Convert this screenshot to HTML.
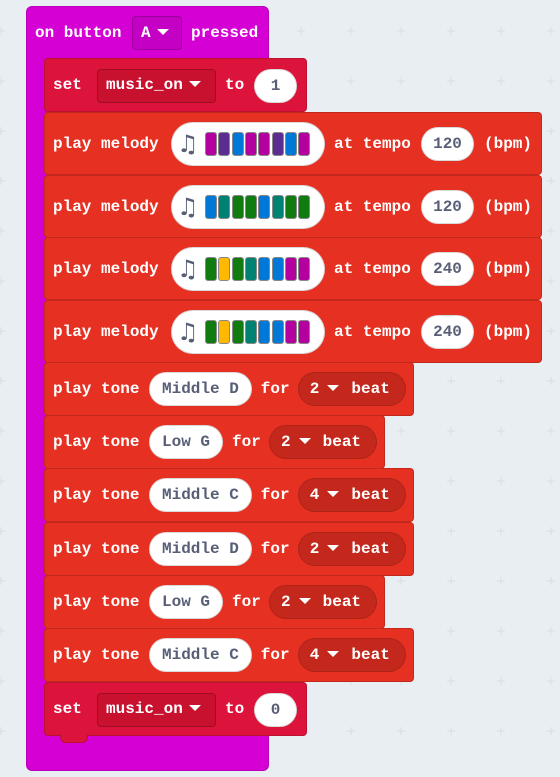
<!DOCTYPE html>
<html><head><meta charset="utf-8"><style>
body{margin:0;width:560px;height:777px;background:#e9eef2;position:relative;overflow:hidden;font-family:"Liberation Mono",monospace;font-weight:bold;font-size:16px;color:#fff}
.a{position:absolute;box-sizing:border-box}
.blk{border-radius:4px;border:1px solid rgba(0,0,0,.15)}
.t{position:absolute;white-space:pre;line-height:20px}
.pill{position:absolute;background:#fff;border-radius:22px;color:#575e75;font-family:"Liberation Mono",monospace;font-weight:bold;text-align:center;box-sizing:border-box;border:1px solid rgba(0,0,0,.15);white-space:pre}
.dd{position:absolute;border-radius:4px;border:1px solid rgba(0,0,0,.2);box-sizing:border-box}
.tri{display:inline-block;width:0;height:0;border-left:6px solid transparent;border-right:6px solid transparent;border-top:6px solid #fff;vertical-align:middle;margin:0 4px 2px 6px}
.tri2{display:inline-block;width:0;height:0;border-left:6px solid transparent;border-right:6px solid transparent;border-top:6px solid #fff;vertical-align:middle;margin:0 12px 2px 8px}
.bar{position:absolute;width:12px;border-radius:3px;border:1px solid #888;box-sizing:border-box}
</style></head><body>
<svg class="a" style="left:0;top:0" width="560" height="777">
<defs><pattern id="g" x="-24" y="6" width="50" height="50" patternUnits="userSpaceOnUse">
<path d="M25 21v8M21 25h8" stroke="#d6dde2" stroke-width="1"/></pattern></defs>
<rect width="560" height="777" fill="url(#g)"/></svg>
<div id="root"></div>
<script>
var h='';
function A(s){h+=s;}
function notch(x,y,c){A('<div class="a" style="left:'+(x+16)+'px;top:'+(y-1)+'px;width:28px;height:9px;background:'+c+';border-radius:0 0 6px 6px;border:1px solid rgba(0,0,0,.15);border-top:none"></div>');}
A('<div class="a" style="left:26px;top:6px;width:243px;height:765px;background:#d400d4;border-radius:6px;border:1px solid rgba(0,0,0,.12)"></div>');
A('<div class="t" style="left:35px;top:23px">on button</div>');
A('<div class="dd" style="left:132px;top:16px;width:50px;height:34px;background:#c400c4"></div><div class="t" style="left:141px;top:23px">A<span class="tri"></span></div>');
A('<div class="t" style="left:191px;top:23px">pressed</div>');
var blocks=[];
function setb(y,v){var c='#dc143c';
A('<div class="a blk" style="left:44px;top:'+y+'px;width:263px;height:54px;background:'+c+'"></div>');
A('<div class="t" style="left:53px;top:'+(y+17)+'px">set</div>');
A('<div class="dd" style="left:97px;top:'+(y+11)+'px;width:119px;height:34px;background:#c8102f"></div><div class="t" style="left:106px;top:'+(y+17)+'px">music_on<span class="tri"></span></div>');
A('<div class="t" style="left:225px;top:'+(y+17)+'px">to</div>');
A('<div class="pill" style="left:254px;top:'+(y+11)+'px;width:43px;height:34px;line-height:32px">'+v+'</div>');
}
var cols={m:'#b4009e',p:'#5c2d91',b:'#0078d7',t:'#008272',g:'#107c10',y:'#ffb900'};
function mel(y,seq,tempo){var c='#e63022';
A('<div class="a blk" style="left:44px;top:'+y+'px;width:498px;height:63px;background:'+c+'"></div>');
A('<div class="t" style="left:53px;top:'+(y+22)+'px">play melody</div>');
A('<div class="pill" style="left:171px;top:'+(y+10)+'px;width:154px;height:44px"></div>');
A('<div class="t" style="left:177px;top:'+(y+19)+'px;color:#575e75;font-size:24px;line-height:26px;font-family:\'DejaVu Sans\',sans-serif">♫</div>');
for(var i=0;i<8;i++)A('<div class="bar" style="left:'+(205+i*13.3)+'px;top:'+(y+20)+'px;height:24px;background:'+cols[seq[i]]+'"></div>');
A('<div class="t" style="left:334px;top:'+(y+22)+'px">at tempo</div>');
A('<div class="pill" style="left:421px;top:'+(y+15)+'px;width:53px;height:34px;line-height:32px">'+tempo+'</div>');
A('<div class="t" style="left:484px;top:'+(y+22)+'px">(bpm)</div>');
}
function tone(y,note,beat){var c='#e63022';var pw=note.length*9.6+26;var px=149;var fx=px+pw+9;var dx=fx+37;var dw=108;
A('<div class="a blk" style="left:44px;top:'+y+'px;width:'+(dx+dw+8-44)+'px;height:54px;background:'+c+'"></div>');
A('<div class="t" style="left:53px;top:'+(y+17)+'px">play tone</div>');
A('<div class="pill" style="left:'+px+'px;top:'+(y+10)+'px;width:'+pw+'px;height:34px;line-height:32px">'+note+'</div>');
A('<div class="t" style="left:'+fx+'px;top:'+(y+17)+'px">for</div>');
A('<div class="a" style="left:'+dx+'px;top:'+(y+10)+'px;width:'+dw+'px;height:34px;border-radius:17px;background:#c4281c;border:1px solid rgba(0,0,0,.12)"></div>');
A('<div class="t" style="left:'+(dx+12)+'px;top:'+(y+17)+'px">'+beat+'<span class="tri2"></span>beat</div>');
}
setb(58,'1');
mel(112,'mpbmmpbm','120');
mel(175,'btggbtgg','120');
mel(237,'gygtbbmm','240');
mel(300,'gygtbbmm','240');
var tones=[['Middle D','2'],['Low G','2'],['Middle C','4'],['Middle D','2'],['Low G','2'],['Middle C','4']];
var ty=[362,415,468,522,575,628];
for(var i=0;i<6;i++)tone(ty[i],tones[i][0],tones[i][1]);
setb(682,'0');
notch(44,735,'#dc143c');
document.getElementById('root').innerHTML=h;
</script>
</body></html>
